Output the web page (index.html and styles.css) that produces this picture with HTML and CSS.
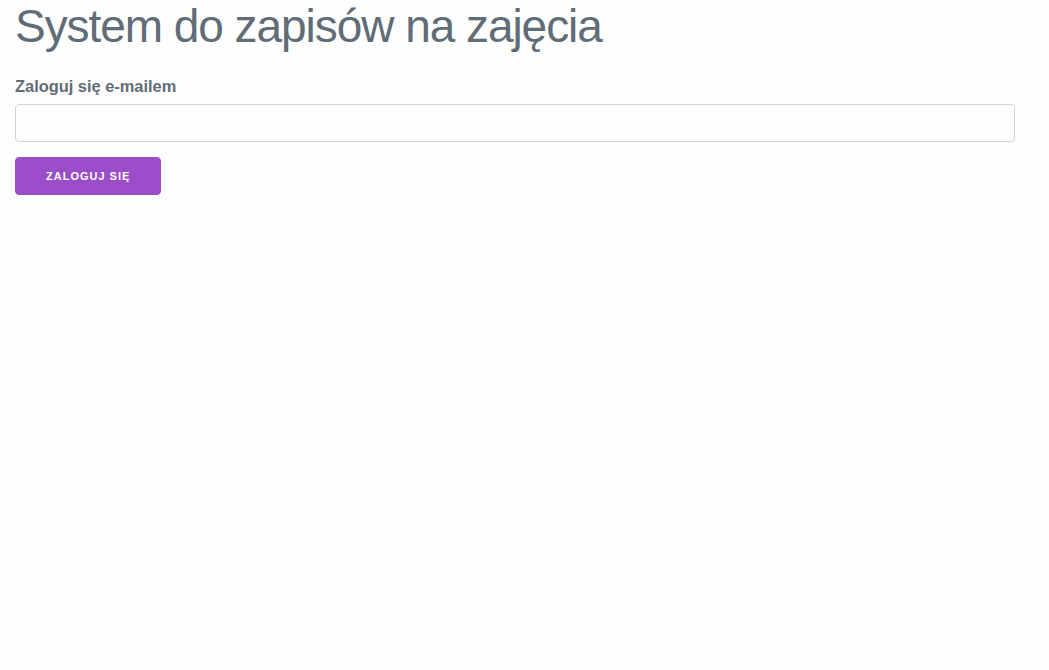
FILE: index.html
```html
<!DOCTYPE html>
<html lang="pl">
<head>
<meta charset="utf-8">
<title>System do zapisów na zajęcia</title>
<link rel="stylesheet" href="styles.css">
</head>
<body>
<main class="page">
  <h1 class="title">System do zapisów na zajęcia</h1>
  <form class="login">
    <label class="label" for="email">Zaloguj się e-mailem</label>
    <input class="input" id="email" type="email">
    <button class="button" type="button">Zaloguj się</button>
  </form>
</main>
</body>
</html>
```

FILE: styles.css
```css
html { font-size: 10px; }
body {
  margin: 0;
  background: #fefefe;
  color: #606c76;
  font-family: "Liberation Sans", Arial, sans-serif;
  font-size: 16px;
}
.page {
  width: 1000px;
  padding: 0 15px;
}
.title {
  margin: 0;
  font-size: 46px;
  font-weight: 300;
  line-height: 52px;
  letter-spacing: -1.05px;
  color: #606c76;
}
.login {
  display: flex;
  flex-direction: column;
  align-items: flex-start;
  margin-top: 24px;
}
.label {
  font-weight: 700;
  font-size: 16.4px;
  line-height: 20px;
  margin-bottom: 8px;
}
.input {
  box-sizing: border-box;
  width: 1000px;
  height: 38px;
  border: 1px solid #d1d1d1;
  border-radius: 4px;
  background: transparent;
  margin: 0 0 15px;
  padding: 6px 10px;
  font: inherit;
}
.button {
  box-sizing: border-box;
  height: 38px;
  padding: 0 30px;
  border: 1px solid #9b4dca;
  border-radius: 4px;
  background: #9b4dca;
  color: #fff;
  font-family: inherit;
  font-size: 11px;
  font-weight: 700;
  letter-spacing: 1px;
  text-transform: uppercase;
  cursor: pointer;
}
```
